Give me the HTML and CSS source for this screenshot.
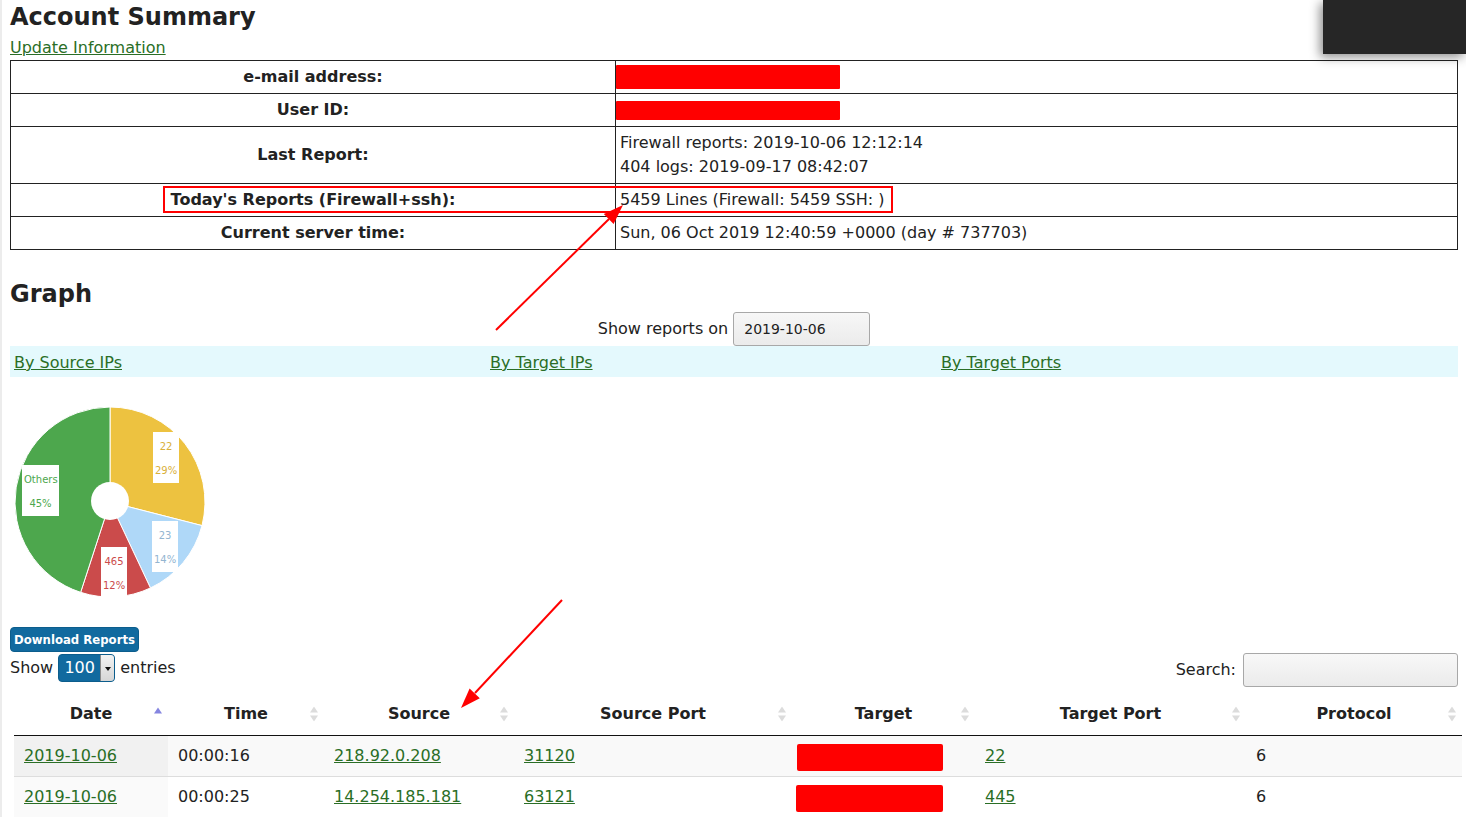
FILE: index.html
```html
<!DOCTYPE html>
<html lang="en">
<head>
<meta charset="utf-8">
<title>Account Summary</title>
<link rel="stylesheet" href="styles.css">
</head>
<body>
<div class="page">
  <h1 class="title">Account Summary</h1>
  <div class="update"><a href="#">Update Information</a></div>
  <table class="summary">
    <colgroup><col class="lab-col"><col></colgroup>
    <tr><th>e-mail address:</th><td><span class="redact redact-mail"></span></td></tr>
    <tr><th>User ID:</th><td><span class="redact redact-user"></span></td></tr>
    <tr><th>Last Report:</th><td>Firewall reports: 2019-10-06 12:12:14<br>404 logs: 2019-09-17 08:42:07</td></tr>
    <tr><th>Today's Reports (Firewall+ssh):</th><td>5459 Lines (Firewall: 5459 SSH: )</td></tr>
    <tr><th>Current server time:</th><td>Sun, 06 Oct 2019 12:40:59 +0000 (day # 737703)</td></tr>
  </table>

  <h2 class="title graph-title">Graph</h2>
  <div class="datepick">
    <span>Show reports on</span>
    <span class="dateinput">2019-10-06</span>
  </div>
  <div class="tabs">
    <div class="tab"><a href="#">By Source IPs</a></div>
    <div class="tab"><a href="#">By Target IPs</a></div>
    <div class="tab"><a href="#">By Target Ports</a></div>
  </div>

  <div class="pie">
    <svg class="pie-svg" width="190" height="190" viewBox="0 0 190 190">
      <path d="M95,95 L95,0 A95,95 0 0 1 187,118.6 Z" fill="#edc240" stroke="#fff" stroke-width="1"/>
      <path d="M95,95 L187,118.6 A95,95 0 0 1 135.45,180.96 Z" fill="#afd8f8" stroke="#fff" stroke-width="1"/>
      <path d="M95,95 L135.45,180.96 A95,95 0 0 1 65.64,185.35 Z" fill="#cb4b4b" stroke="#fff" stroke-width="1"/>
      <path d="M95,95 L65.64,185.35 A95,95 0 0 1 95,0 Z" fill="#4da74d" stroke="#fff" stroke-width="1"/>
      <circle cx="95" cy="94" r="19" fill="#fff"/>
    </svg>
    <div class="plabel pl-yellow">22<br>29%</div>
    <div class="plabel pl-blue">23<br>14%</div>
    <div class="plabel pl-red">465<br>12%</div>
    <div class="plabel pl-green">Others<br>45%</div>
  </div>

  <button class="dl" type="button">Download Reports</button>

  <div class="controls">
    <div class="length">
      <span>Show</span>
      <span class="select"><span class="sel-val">100</span><span class="sel-arrow"></span></span>
      <span>entries</span>
    </div>
    <div class="search">
      <span>Search:</span>
      <span class="search-input"></span>
    </div>
  </div>

  <table class="data">
    <colgroup>
      <col style="width:154px"><col style="width:156px"><col style="width:190px"><col style="width:278px"><col style="width:183px"><col style="width:271px"><col style="width:216px">
    </colgroup>
    <thead>
      <tr>
        <th>Date<svg class="sort" width="8" height="15" viewBox="0 0 8 15"><polygon points="0,7 4,1 8,7" fill="#8585e0"/></svg></th>
        <th>Time<svg class="sort" width="8" height="15" viewBox="0 0 8 15"><polygon points="0,6 4,0 8,6" fill="#dcdcdc"/><polygon points="0,9 4,15 8,9" fill="#dcdcdc"/></svg></th>
        <th>Source<svg class="sort" width="8" height="15" viewBox="0 0 8 15"><polygon points="0,6 4,0 8,6" fill="#dcdcdc"/><polygon points="0,9 4,15 8,9" fill="#dcdcdc"/></svg></th>
        <th>Source Port<svg class="sort" width="8" height="15" viewBox="0 0 8 15"><polygon points="0,6 4,0 8,6" fill="#dcdcdc"/><polygon points="0,9 4,15 8,9" fill="#dcdcdc"/></svg></th>
        <th>Target<svg class="sort" width="8" height="15" viewBox="0 0 8 15"><polygon points="0,6 4,0 8,6" fill="#dcdcdc"/><polygon points="0,9 4,15 8,9" fill="#dcdcdc"/></svg></th>
        <th>Target Port<svg class="sort" width="8" height="15" viewBox="0 0 8 15"><polygon points="0,6 4,0 8,6" fill="#dcdcdc"/><polygon points="0,9 4,15 8,9" fill="#dcdcdc"/></svg></th>
        <th>Protocol<svg class="sort" width="8" height="15" viewBox="0 0 8 15"><polygon points="0,6 4,0 8,6" fill="#dcdcdc"/><polygon points="0,9 4,15 8,9" fill="#dcdcdc"/></svg></th>
      </tr>
    </thead>
    <tbody>
      <tr class="odd">
        <td class="sorted"><a href="#">2019-10-06</a></td>
        <td>00:00:16</td>
        <td><a href="#">218.92.0.208</a></td>
        <td><a href="#">31120</a></td>
        <td><span class="redact-cell"></span></td>
        <td><a href="#">22</a></td>
        <td>6</td>
      </tr>
      <tr class="even">
        <td class="sorted"><a href="#">2019-10-06</a></td>
        <td>00:00:25</td>
        <td><a href="#">14.254.185.181</a></td>
        <td><a href="#">63121</a></td>
        <td><span class="redact-cell redact-cell2"></span></td>
        <td><a href="#">445</a></td>
        <td>6</td>
      </tr>
    </tbody>
  </table>
</div>

<svg class="annot" width="1466" height="817" viewBox="0 0 1466 817">
  <rect x="164" y="187" width="728" height="25" fill="none" stroke="#f00" stroke-width="2"/>
  <line x1="496" y1="330" x2="609" y2="219" stroke="#f00" stroke-width="2"/>
  <polygon points="623,205 613.6,224 603.8,214" fill="#f00"/>
  <line x1="562" y1="600" x2="475" y2="693" stroke="#f00" stroke-width="2"/>
  <polygon points="461,708 479.8,698.2 469.6,688.6" fill="#f00"/>
</svg>

<div class="darkbox"></div>
</body>
</html>
```

FILE: styles.css
```css
html {
  overflow: hidden;
}
body {
  margin: 0;
  border-left: 2px solid #ececec;
  font-family: "DejaVu Sans", "Liberation Sans", sans-serif;
  font-size: 16px;
  line-height: 24px;
  color: #222;
  background: #fff;
  min-height: 817px;
  box-sizing: border-box;
}
a {
  color: #2a6e26;
  text-decoration: underline;
}
.page {
  padding: 0 0 0 8px;
  position: relative;
}
.title {
  margin: 0;
  font-size: 24px;
  font-weight: bold;
  line-height: 32px;
}
h1.title {
  padding-top: 1px;
}
.update {
  padding-top: 3px;
  height: 24px;
  line-height: 24px;
}

/* summary table */
.summary {
  width: 1448px;
  border-collapse: collapse;
  table-layout: fixed;
  border: 1px solid #222;
}
.summary .lab-col {
  width: 605px;
}
.summary th,
.summary td {
  border: 1px solid #222;
  padding: 4px;
  line-height: 24px;
  vertical-align: middle;
}
.summary th {
  text-align: center;
  font-weight: bold;
}
.summary td {
  text-align: left;
}
.redact {
  display: block;
  background: #f00;
  width: 224px;
  margin-left: -4px;
  border-radius: 1px;
}
.redact-mail {
  height: 24px;
}
.redact-user {
  height: 19px;
  margin-top: 3px;
  margin-bottom: 2px;
}

.graph-title {
  margin-top: 28px;
}
.datepick {
  display: flex;
  justify-content: center;
  align-items: center;
  gap: 5px;
  width: 1448px;
  height: 34px;
  padding-top: 2px;
}
.dateinput {
  box-sizing: border-box;
  width: 137px;
  height: 34px;
  border: 1px solid #a8a8a8;
  border-radius: 3px;
  background: linear-gradient(#f7f7f7, #ebebeb);
  font-size: 14px;
  line-height: 32px;
  padding-left: 10px;
}
.tabs {
  display: grid;
  grid-template-columns: 476px 451px 1fr;
  width: 1448px;
  background: #e4f9fd;
  height: 31px;
}
.tab {
  padding: 5px 4px 2px;
  line-height: 24px;
}

/* pie */
.pie {
  position: relative;
  height: 250px;
}
.pie-svg {
  position: absolute;
  left: 5px;
  top: 30px;
}
.plabel {
  position: absolute;
  background: #fff;
  font-size: 10px;
  line-height: 24px;
  padding: 3px 2px 0;
  text-align: center;
}
.pl-yellow { left: 143px; top: 55px; width: 22px; color: #d9b03a; }
.pl-blue { left: 142px; top: 144px; width: 22px; color: #93b5d1; }
.pl-red { left: 91px; top: 170px; width: 22px; color: #cb4b4b; }
.pl-green { left: 12px; top: 88px; width: 33px; color: #4da74d; }

/* download */
.dl {
  display: block;
  margin: 0;
  height: 25px;
  width: 129px;
  padding: 0;
  border: 1px solid #0c5d8c;
  border-radius: 4px;
  background: #116a9f;
  color: #fff;
  font-family: "DejaVu Sans Condensed", "DejaVu Sans", sans-serif;
  font-stretch: condensed;
  font-weight: bold;
  font-size: 13px;
  line-height: 23px;
}

.controls {
  display: flex;
  justify-content: space-between;
  align-items: flex-start;
  width: 1448px;
  height: 40px;
}
.length {
  display: flex;
  align-items: center;
  gap: 5px;
  margin-top: 2px;
}
.select {
  display: flex;
  box-sizing: border-box;
  width: 57px;
  height: 28px;
  border: 1px solid #0c5d8c;
  border-radius: 4px;
  background: #116a9f;
  overflow: hidden;
}
.sel-val {
  flex: 1;
  color: #fff;
  font-size: 16px;
  line-height: 26px;
  text-align: center;
}
.sel-arrow {
  position: relative;
  width: 13px;
  background: linear-gradient(#f2f2f2, #d6d6d6);
  border-left: 1px solid #8a8a8a;
}
.sel-arrow::after {
  content: "";
  position: absolute;
  left: 4px;
  top: 12px;
  border-left: 3px solid transparent;
  border-right: 3px solid transparent;
  border-top: 4px solid #111;
}
.search {
  display: flex;
  align-items: center;
  gap: 7px;
  margin-top: 1px;
}
.search-input {
  display: block;
  box-sizing: border-box;
  width: 215px;
  height: 34px;
  border: 1px solid #a8a8a8;
  border-radius: 3px;
  background: linear-gradient(#f8f8f8, #ebebeb);
}

/* data table */
.data {
  margin-left: 4px;
  width: 1448px;
  border-collapse: collapse;
  table-layout: fixed;
}
.data th {
  position: relative;
  padding: 10px 10px 9px;
  line-height: 24px;
  font-weight: bold;
  text-align: center;
  border-bottom: 1px solid #111;
}
.sort {
  position: absolute;
  right: 6px;
  top: 50%;
  transform: translateY(-50%);
}
.data td {
  padding: 8px 10px;
  line-height: 24px;
  text-align: left;
}
.data tr.even td {
  border-top: 1px solid #ddd;
}
.data tr.odd td {
  background: #f9f9f9;
}
.data tr.odd td.sorted {
  background: #f1f1f1;
}
.data tr.even td.sorted {
  background: #fafafa;
}
.redact-cell {
  display: block;
  width: 146px;
  height: 27px;
  margin-left: -5px;
  margin-bottom: -3px;
  background: #f00;
  border-radius: 2px;
}
.redact-cell2 {
  margin-left: -6px;
  width: 147px;
}

.annot {
  position: absolute;
  left: 0;
  top: 0;
  pointer-events: none;
}
.darkbox {
  position: fixed;
  top: 0;
  right: 0;
  width: 143px;
  height: 54px;
  background: #262626;
  box-shadow: -3px 3px 10px rgba(0, 0, 0, 0.45);
}
```
